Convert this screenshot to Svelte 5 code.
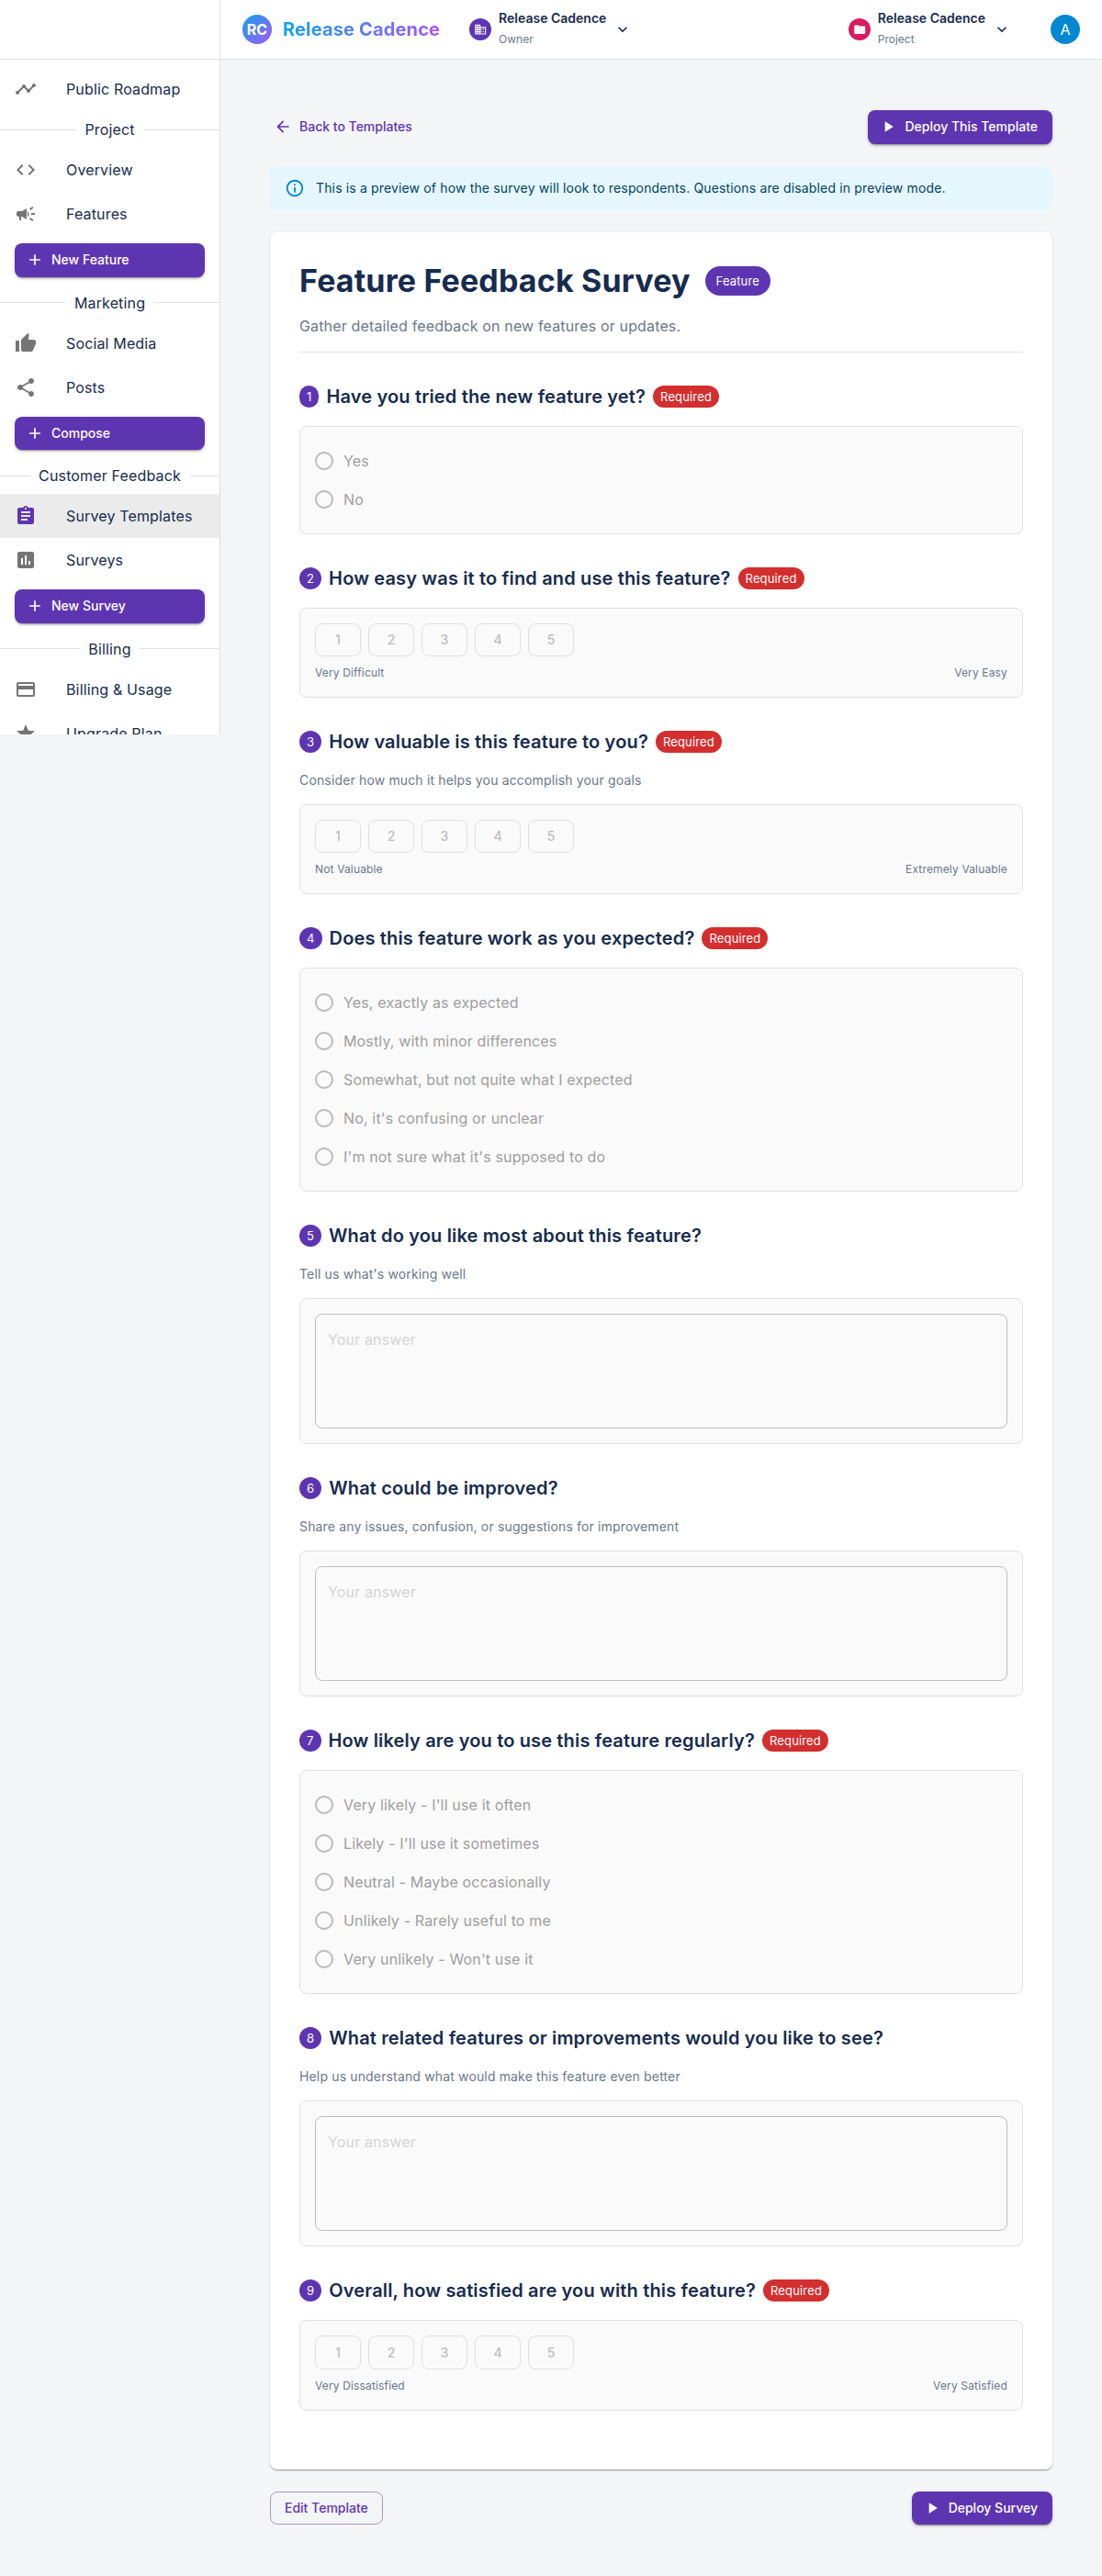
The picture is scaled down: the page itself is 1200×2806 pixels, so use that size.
<script>
  const icons = {
    timeline: 'M23 8c0 1.1-.9 2-2 2-.18 0-.35-.02-.51-.07l-3.56 3.55c.05.16.07.34.07.52 0 1.1-.9 2-2 2s-2-.9-2-2c0-.18.02-.36.07-.52l-2.55-2.55c-.16.05-.34.07-.52.07s-.36-.02-.52-.07l-4.55 4.56c.05.16.07.33.07.51 0 1.1-.9 2-2 2s-2-.9-2-2 .9-2 2-2c.18 0 .35.02.51.07l4.56-4.55C8.02 9.36 8 9.18 8 9c0-1.1.9-2 2-2s2 .9 2 2c0 .18-.02.36-.07.52l2.55 2.55c.16-.05.34-.07.52-.07s.36.02.52.07l3.55-3.56C19.02 8.35 19 8.18 19 8c0-1.1.9-2 2-2s2 .9 2 2z',
    code: 'M9.4 16.6 4.8 12l4.6-4.6L8 6l-6 6 6 6 1.4-1.4zm5.2 0 4.6-4.6-4.6-4.6L16 6l6 6-6 6-1.4-1.4z',
    campaign: 'M18 11v2h4v-2h-4zm-2 6.61c.96.71 2.21 1.65 3.2 2.39.4-.53.8-1.07 1.2-1.6-.99-.74-2.24-1.68-3.2-2.4-.4.54-.8 1.08-1.2 1.61zM20.4 5.6c-.4-.53-.8-1.07-1.2-1.6-.99.74-2.24 1.68-3.2 2.4.4.53.8 1.07 1.2 1.6.96-.72 2.21-1.65 3.2-2.4zM4 9c-1.1 0-2 .9-2 2v2c0 1.1.9 2 2 2h1v4h2v-4h1l5 3V6L8 9H4zm11.5 3c0-1.33-.58-2.53-1.5-3.35v6.69c.92-.81 1.5-2.01 1.5-3.34z',
    thumb: 'M1 21h4V9H1v12zm22-11c0-1.1-.9-2-2-2h-6.31l.95-4.57.03-.32c0-.41-.17-.79-.44-1.06L14.17 1 7.59 7.59C7.22 7.95 7 8.45 7 9v10c0 1.1.9 2 2 2h9c.83 0 1.54-.5 1.84-1.22l3.02-7.05c.09-.23.14-.47.14-.73v-2z',
    share: 'M18 16.08c-.76 0-1.44.3-1.96.77L8.91 12.7c.05-.23.09-.46.09-.7s-.04-.47-.09-.7l7.05-4.11c.54.5 1.25.81 2.04.81 1.66 0 3-1.34 3-3s-1.34-3-3-3-3 1.34-3 3c0 .24.04.47.09.7L8.04 9.81C7.5 9.31 6.79 9 6 9c-1.66 0-3 1.34-3 3s1.34 3 3 3c.79 0 1.5-.31 2.04-.81l7.12 4.16c-.05.21-.08.43-.08.65 0 1.61 1.31 2.92 2.92 2.92 1.61 0 2.92-1.31 2.92-2.92s-1.31-2.92-2.92-2.92z',
    assignment: 'M19 3h-4.18C14.4 1.84 13.3 1 12 1c-1.3 0-2.4.84-2.82 2H5c-1.1 0-2 .9-2 2v14c0 1.1.9 2 2 2h14c1.1 0 2-.9 2-2V5c0-1.1-.9-2-2-2zm-7 0c.55 0 1 .45 1 1s-.45 1-1 1-1-.45-1-1 .45-1 1-1zm2 14H7v-2h7v2zm3-4H7v-2h10v2zm0-4H7V7h10v2z',
    poll: 'M19 3H5c-1.1 0-2 .9-2 2v14c0 1.1.9 2 2 2h14c1.1 0 2-.9 2-2V5c0-1.1-.9-2-2-2zM9 17H7v-7h2v7zm4 0h-2V7h2v10zm4 0h-2v-4h2v4z',
    card: 'M20 4H4c-1.11 0-1.99.89-1.99 2L2 18c0 1.11.89 2 2 2h16c1.11 0 2-.89 2-2V6c0-1.11-.89-2-2-2zm0 14H4v-6h16v6zm0-10H4V6h16v2z',
    star: 'M12 17.27 18.18 21l-1.64-7.03L22 9.24l-7.19-.61L12 2 9.19 8.63 2 9.24l5.46 4.73L5.82 21z',
    add: 'M19 13h-6v6h-2v-6H5v-2h6V5h2v6h6v2z',
    business: 'M12 7V3H2v18h20V7H12zM6 19H4v-2h2v2zm0-4H4v-2h2v2zm0-4H4V9h2v2zm0-4H4V5h2v2zm4 12H8v-2h2v2zm0-4H8v-2h2v2zm0-4H8V9h2v2zm0-4H8V5h2v2zm10 12h-8v-2h2v-2h-2v-2h2v-2h-2V9h8v10zm-2-8h-2v2h2v-2zm0 4h-2v2h2v-2z',
    folder: 'M10 4H4c-1.1 0-1.99.9-1.99 2L2 18c0 1.1.9 2 2 2h16c1.1 0 2-.9 2-2V8c0-1.1-.9-2-2-2h-8l-2-2z',
    chevron: 'M7.41 8.59 12 13.17l4.59-4.58L18 10l-6 6-6-6 1.41-1.41z',
    back: 'M20 11H7.83l5.59-5.59L12 4l-8 8 8 8 1.41-1.41L7.83 13H20v-2z',
    play: 'M8 5v14l11-7z',
    info: 'M11 7h2v2h-2zm0 4h2v6h-2zm1-9C6.48 2 2 6.48 2 12s4.48 10 10 10 10-4.48 10-10S17.52 2 12 2zm0 18c-4.41 0-8-3.59-8-8s3.59-8 8-8 8 3.59 8 8-3.59 8-8 8z',
    radio: 'M12 2C6.48 2 2 6.48 2 12s4.48 10 10 10 10-4.48 10-10S17.52 2 12 2zm0 18c-4.42 0-8-3.58-8-8s3.58-8 8-8 8 3.58 8 8-3.58 8-8 8z'
  };

  const nav = [
    { type: 'item', icon: 'timeline', label: 'Public Roadmap' },
    { type: 'heading', label: 'Project' },
    { type: 'item', icon: 'code', label: 'Overview' },
    { type: 'item', icon: 'campaign', label: 'Features' },
    { type: 'action', label: 'New Feature' },
    { type: 'heading', label: 'Marketing' },
    { type: 'item', icon: 'thumb', label: 'Social Media' },
    { type: 'item', icon: 'share', label: 'Posts' },
    { type: 'action', label: 'Compose' },
    { type: 'heading', label: 'Customer Feedback' },
    { type: 'item', icon: 'assignment', label: 'Survey Templates', active: true },
    { type: 'item', icon: 'poll', label: 'Surveys' },
    { type: 'action', label: 'New Survey' },
    { type: 'heading', label: 'Billing' },
    { type: 'item', icon: 'card', label: 'Billing & Usage' },
    { type: 'item', icon: 'star', label: 'Upgrade Plan' }
  ];

  const questions = [
    { title: 'Have you tried the new feature yet?', required: true, options: ['Yes', 'No'] },
    { title: 'How easy was it to find and use this feature?', required: true, scale: ['Very Difficult', 'Very Easy'] },
    {
      title: 'How valuable is this feature to you?',
      required: true,
      hint: 'Consider how much it helps you accomplish your goals',
      scale: ['Not Valuable', 'Extremely Valuable']
    },
    {
      title: 'Does this feature work as you expected?',
      required: true,
      options: [
        'Yes, exactly as expected',
        'Mostly, with minor differences',
        'Somewhat, but not quite what I expected',
        "No, it's confusing or unclear",
        "I'm not sure what it's supposed to do"
      ]
    },
    { title: 'What do you like most about this feature?', hint: "Tell us what's working well" },
    { title: 'What could be improved?', hint: 'Share any issues, confusion, or suggestions for improvement' },
    {
      title: 'How likely are you to use this feature regularly?',
      required: true,
      options: [
        "Very likely - I'll use it often",
        "Likely - I'll use it sometimes",
        'Neutral - Maybe occasionally',
        'Unlikely - Rarely useful to me',
        "Very unlikely - Won't use it"
      ]
    },
    {
      title: 'What related features or improvements would you like to see?',
      hint: 'Help us understand what would make this feature even better'
    },
    {
      title: 'Overall, how satisfied are you with this feature?',
      required: true,
      scale: ['Very Dissatisfied', 'Very Satisfied']
    }
  ];
</script>

{#snippet icon(name)}
  <svg class="icon" viewBox="0 0 24 24" aria-hidden="true"><path d={icons[name]} /></svg>
{/snippet}

<div class="app">
  <aside class="sidebar">
    <div class="sidebar-top"></div>
    <nav>
      {#each nav as entry}
        {#if entry.type === 'item'}
          <div class="nav-item" class:active={entry.active}>
            {@render icon(entry.icon)}
            <span>{entry.label}</span>
          </div>
        {:else if entry.type === 'heading'}
          <div class="nav-heading"><span>{entry.label}</span></div>
        {:else}
          <button class="btn filled nav-action">{@render icon('add')}{entry.label}</button>
        {/if}
      {/each}
    </nav>
  </aside>

  <div class="page">
    <header>
      <div class="logo">RC</div>
      <div class="brand">Release Cadence</div>
      <div class="switcher">
        <div class="badge purple">{@render icon('business')}</div>
        <div class="who"><strong>Release Cadence</strong><small>Owner</small></div>
        {@render icon('chevron')}
      </div>
      <div class="switcher project">
        <div class="badge pink">{@render icon('folder')}</div>
        <div class="who"><strong>Release Cadence</strong><small>Project</small></div>
        {@render icon('chevron')}
      </div>
      <div class="avatar">A</div>
    </header>

    <main>
      <div class="row">
        <button class="btn text">{@render icon('back')}Back to Templates</button>
        <button class="btn filled">{@render icon('play')}Deploy This Template</button>
      </div>

      <div class="alert">
        {@render icon('info')}
        <span>This is a preview of how the survey will look to respondents. Questions are disabled in preview mode.</span>
      </div>

      <section class="card">
        <div class="title">
          <h1>Feature Feedback Survey</h1>
          <span class="chip large">Feature</span>
        </div>
        <p class="lead">Gather detailed feedback on new features or updates.</p>

        {#each questions as q, i}
          <div class="question">
            <div class="q-head">
              <span class="chip">{i + 1}</span>
              <h2>{q.title}</h2>
              {#if q.required}<span class="chip red">Required</span>{/if}
            </div>
            {#if q.hint}<p class="hint">{q.hint}</p>{/if}
            <div class="box">
              {#if q.options}
                {#each q.options as option}
                  <div class="option">{@render icon('radio')}<span>{option}</span></div>
                {/each}
              {:else if q.scale}
                <div class="scale">
                  {#each [1, 2, 3, 4, 5] as n}<span>{n}</span>{/each}
                </div>
                <div class="ends"><span>{q.scale[0]}</span><span>{q.scale[1]}</span></div>
              {:else}
                <div class="answer">Your answer</div>
              {/if}
            </div>
          </div>
        {/each}
      </section>

      <div class="row bottom">
        <button class="btn outlined">Edit Template</button>
        <button class="btn filled">{@render icon('play')}Deploy Survey</button>
      </div>
    </main>
  </div>
</div>

<style>
  :global(body) {
    margin: 0;
    background: #f4f5f7;
  }
  .app {
    display: flex;
    align-items: flex-start;
    min-height: 2806px;
    background: #f4f5f7;
    color: #172b4d;
    font-family: Inter, 'Liberation Sans', sans-serif;
    font-size: 16px;
    line-height: 24px;
    letter-spacing: 0.15px;
  }
  .app :global(*) {
    box-sizing: border-box;
  }
  .icon {
    width: 24px;
    height: 24px;
    flex: none;
    fill: currentColor;
  }

  .sidebar {
    width: 240px;
    height: 800px;
    flex: none;
    overflow: hidden;
    background: #fff;
    border-right: 1px solid #e0e0e0;
  }
  .sidebar-top {
    height: 65px;
    border-bottom: 1px solid #e0e0e0;
  }
  nav {
    display: flex;
    flex-direction: column;
    padding-top: 8px;
  }
  .nav-item {
    display: flex;
    align-items: center;
    height: 48px;
    padding: 0 16px;
    gap: 32px;
    white-space: nowrap;
  }
  .nav-item .icon {
    color: #757575;
  }
  .nav-item.active {
    background: #ebebeb;
  }
  .nav-item.active .icon {
    color: #5e35b1;
  }
  .nav-heading {
    display: flex;
    align-items: center;
    height: 24px;
    margin: 8px 0;
    white-space: nowrap;
  }
  .nav-heading::before,
  .nav-heading::after {
    content: '';
    flex: 1;
    border-top: 1px solid #e0e0e0;
  }
  .nav-heading span {
    padding: 0 9.6px;
  }

  .btn {
    display: inline-flex;
    align-items: center;
    height: 36.5px;
    padding: 0 16px;
    border: 0;
    border-radius: 8px;
    background: transparent;
    font: 500 14px/24.5px Inter, 'Liberation Sans', sans-serif;
    letter-spacing: 0;
    color: #5e35b1;
    white-space: nowrap;
  }
  .btn .icon {
    width: 20px;
    height: 20px;
    margin: 0 8px 0 -4px;
  }
  .btn.filled {
    background: #5e35b1;
    color: #fff;
    box-shadow:
      0 3px 1px -2px rgba(0, 0, 0, 0.2),
      0 2px 2px rgba(0, 0, 0, 0.14),
      0 1px 5px rgba(0, 0, 0, 0.12);
  }
  .btn.text {
    padding: 0 8px;
  }
  .btn.outlined {
    border: 1px solid rgba(94, 53, 177, 0.5);
    padding: 0 15px;
  }
  .nav-action {
    display: flex;
    width: 207px;
    margin: 8px 16px;
  }

  .page {
    flex: 1;
    min-width: 0;
  }
  header {
    display: flex;
    align-items: center;
    height: 65px;
    padding: 0 24px;
    background: #fff;
    border-bottom: 1px solid #dfe1e6;
  }
  .logo,
  .avatar {
    display: flex;
    align-items: center;
    justify-content: center;
    width: 32px;
    height: 32px;
    border-radius: 50%;
    color: #fff;
  }
  .logo {
    background: linear-gradient(135deg, #0ea5e9, #a855f7);
    font-weight: 700;
  }
  .brand {
    margin-left: 12px;
    font-size: 20px;
    font-weight: 700;
    background: linear-gradient(90deg, #0ea5e9, #a855f7);
    -webkit-background-clip: text;
    background-clip: text;
    color: transparent;
  }
  .switcher {
    display: flex;
    align-items: center;
    margin-left: 32px;
    letter-spacing: 0;
  }
  .switcher > .icon {
    width: 20px;
    height: 20px;
    margin-left: 8px;
  }
  .project {
    margin-left: auto;
  }
  .badge {
    display: flex;
    align-items: center;
    justify-content: center;
    width: 24px;
    height: 24px;
    margin-right: 8px;
    border-radius: 50%;
    color: #f4f5f7;
  }
  .badge .icon {
    width: 14.4px;
    height: 14.4px;
  }
  .purple {
    background: #5e35b1;
  }
  .pink {
    background: #d81b60;
  }
  .who {
    display: flex;
    flex-direction: column;
  }
  .who strong {
    font-size: 14px;
    line-height: 22px;
    font-weight: 600;
  }
  .who small {
    font-size: 12px;
    line-height: 24px;
    color: #6b778c;
  }
  .avatar {
    margin-left: 43px;
    background: #0288d1;
  }

  main {
    width: 852px;
    margin: 0 auto;
    padding-top: 55px;
  }
  .row {
    display: flex;
    justify-content: space-between;
  }
  .alert {
    display: flex;
    align-items: center;
    height: 48px;
    margin: 24px 0;
    padding: 0 16px;
    gap: 12px;
    border-radius: 8px;
    background: #e5f6fd;
    color: #014361;
    font-size: 14px;
    line-height: 20px;
  }
  .alert .icon {
    width: 22px;
    height: 22px;
    color: #0288d1;
  }

  .card {
    padding: 32px 32px 64px;
    border-radius: 8px;
    background: #fff;
    box-shadow:
      0 2px 1px -1px rgba(0, 0, 0, 0.2),
      0 1px 1px rgba(0, 0, 0, 0.14),
      0 1px 3px rgba(0, 0, 0, 0.12);
  }
  .title {
    display: flex;
    align-items: center;
    gap: 16px;
  }
  h1 {
    margin: 0;
    font-size: 34px;
    line-height: 42px;
    font-weight: 700;
  }
  .lead {
    margin: 16px 0 0;
    padding-bottom: 16px;
    border-bottom: 1px solid #e0e0e0;
    color: #6b778c;
  }
  .chip {
    display: inline-flex;
    align-items: center;
    height: 24px;
    padding: 0 8px;
    border-radius: 16px;
    background: #5e35b1;
    color: #fff;
    font-size: 13px;
    line-height: 24px;
  }
  .chip.large {
    height: 32px;
    padding: 0 12px;
  }
  .chip.red {
    background: #d32f2f;
  }
  .question {
    margin-top: 32px;
  }
  .q-head {
    display: flex;
    align-items: center;
    height: 32px;
    gap: 8px;
  }
  h2 {
    margin: 0;
    font-size: 20px;
    line-height: 32px;
    font-weight: 600;
  }
  .hint {
    margin: 16px 0 0;
    color: #6b778c;
    font-size: 14px;
    line-height: 20px;
  }
  .box {
    margin-top: 16px;
    padding: 16px;
    border: 1px solid #e0e0e0;
    border-radius: 8px;
    background: #fafafa;
  }
  .option {
    display: flex;
    align-items: center;
    height: 42px;
    gap: 9px;
    margin-left: -2px;
    color: #9e9e9e;
  }
  .option .icon {
    color: #bdbdbd;
  }
  .scale {
    display: flex;
    gap: 8px;
  }
  .scale span {
    display: flex;
    align-items: center;
    justify-content: center;
    width: 50px;
    height: 36.5px;
    border: 1px solid #e0e0e0;
    border-radius: 8px;
    color: #bdbdbd;
    font-size: 14px;
    font-weight: 500;
    letter-spacing: 0;
  }
  .ends {
    display: flex;
    justify-content: space-between;
    margin-top: 8px;
    color: #6b778c;
    font-size: 12px;
    line-height: 19.92px;
  }
  .answer {
    height: 125px;
    padding: 15.5px 13px;
    border: 1px solid #bdbdbd;
    border-radius: 8px;
    line-height: 23px;
    color: #d5d5d5;
  }
  .bottom {
    margin-top: 24px;
  }
</style>
